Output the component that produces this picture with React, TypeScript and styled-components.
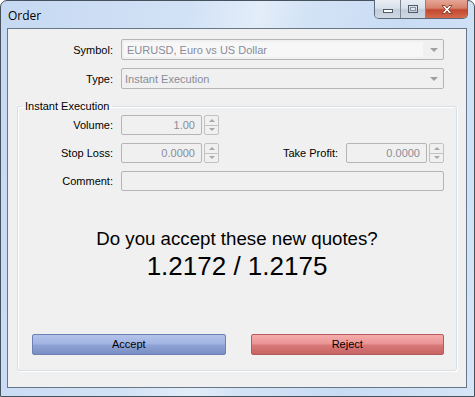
import styled, { createGlobalStyle } from "styled-components";

const GlobalStyle = createGlobalStyle`
    html, body {
        margin: 0;
        padding: 0;
        overflow: hidden;
    }
    * {
        box-sizing: border-box;
    }
`;

const Window = styled.div`
    display: flex;
    flex-direction: column;
    width: 475px;
    height: 397px;
    border: 1px solid #46525e;
    border-radius: 7px 7px 0 0;
    background: linear-gradient(100deg, #c6d9f2 0%, #d2e2f6 35%, #e3edf9 48%, #d4e3f6 56%, #c9dcf4 75%, #d6e5f7 100%);
    font-family: "Liberation Sans", Arial, sans-serif;
    font-size: 11px;
    color: #000;
`;

const TitleBar = styled.div`
    display: flex;
    align-items: flex-start;
    height: 27px;
    flex-shrink: 0;
`;

const Title = styled.div`
    padding: 6px 0 0 7px;
    font-family: "Open Sans", "Noto Sans", sans-serif;
    font-size: 12px;
    color: #000;
`;

const CaptionGroup = styled.div`
    display: flex;
    margin-left: auto;
    margin-right: 6px;
    height: 19px;
    margin-top: -1px;
    border: 1px solid #5b6877;
    border-top: none;
    border-radius: 0 0 5px 5px;
    overflow: hidden;
`;

const CaptionButton = styled.div<{ $width: number; $close?: boolean }>`
    display: flex;
    align-items: center;
    justify-content: center;
    width: ${(p) => p.$width}px;
    height: 100%;
    background: ${(p) =>
        p.$close
            ? "linear-gradient(to bottom, #e6a796 0%, #d7826c 45%, #c2472e 55%, #d56b4f 100%)"
            : "linear-gradient(to bottom, #e9eef4 0%, #d9e1ea 45%, #c2cddb 55%, #cfd9e5 100%)"};
    & + & {
        border-left: 1px solid #7b8896;
    }
`;

const Client = styled.div`
    display: flex;
    flex-direction: column;
    flex: 1;
    margin: 0 7px 8px 6px;
    border: 1px solid #66778a;
    background: #f0f0f0;
`;

const TopRows = styled.div`
    display: flex;
    flex-direction: column;
    gap: 8px;
    padding: 10px 22px 0 0;
`;

const Row = styled.div`
    display: flex;
    align-items: center;
    gap: 8px;
    height: 21px;
`;

const Label = styled.span<{ $width?: number }>`
    width: ${(p) => (p.$width ? `${p.$width}px` : "auto")};
    flex: ${(p) => (p.$width ? "none" : "1")};
    text-align: right;
    white-space: nowrap;
`;

const SelectBox = styled.div`
    position: relative;
    display: flex;
    align-items: center;
    flex: 1;
    height: 21px;
    padding: 2px 20px 2px 2px;
    border: 1px solid #b5b5b5;
    border-radius: 2px;
    background: #f0f0f0;
    color: #8a8c99;
`;

const SelectText = styled.div<{ $highlight?: boolean }>`
    display: flex;
    align-items: center;
    width: 100%;
    height: 100%;
    padding-left: ${(p) => (p.$highlight ? "3px" : "1px")};
    background: ${(p) => (p.$highlight ? "#f7f7f7" : "transparent")};
`;

const Arrow = styled.span`
    position: absolute;
    right: 5px;
    top: 8px;
    width: 0;
    height: 0;
    border-left: 4px solid transparent;
    border-right: 4px solid transparent;
    border-top: 4px solid #a0a0a0;
`;

const Group = styled.fieldset`
    display: flex;
    flex-direction: column;
    flex: 1;
    margin: 11px 9px 16px 9px;
    padding: 2px 12px 15px 0;
    border: 1px solid #d5dfe5;
    border-radius: 3px;
    box-shadow: inset 1px 1px 0 #fff, 1px 1px 0 #fff;
    min-width: 0;
`;

const Legend = styled.legend`
    margin-left: 4px;
    padding: 0 3px;
    line-height: 13px;
`;

const GroupRows = styled.div`
    display: flex;
    flex-direction: column;
    gap: 8px;
`;

const FieldRow = styled.div`
    display: flex;
    align-items: center;
    gap: 8px;
    height: 20px;
`;

const Spinner = styled.div`
    display: flex;
    align-items: center;
    gap: 2px;
`;

const NumberBox = styled.div`
    width: 81px;
    height: 20px;
    padding: 0 6px;
    border: 1px solid #b5b5b5;
    border-radius: 2px;
    line-height: 18px;
    text-align: right;
    color: #8a8c99;
`;

const SpinButtons = styled.div`
    display: flex;
    flex-direction: column;
    width: 15px;
    height: 20px;
    border: 1px solid #c2c2c2;
    border-radius: 2px;
`;

const SpinHalf = styled.div<{ $up?: boolean }>`
    display: flex;
    align-items: center;
    justify-content: center;
    flex: 1;
    & + & {
        border-top: 1px solid #c2c2c2;
    }
    &::after {
        content: "";
        border-left: 3px solid transparent;
        border-right: 3px solid transparent;
        ${(p) => (p.$up ? "border-bottom: 3px solid #a8a8a8;" : "border-top: 3px solid #a8a8a8;")}
    }
`;

const TextBox = styled.div`
    flex: 1;
    height: 20px;
    border: 1px solid #b5b5b5;
    border-radius: 2px;
`;

const Quote = styled.div`
    display: flex;
    flex-direction: column;
    align-items: center;
    margin-top: 37px;
    padding-left: 12px;
`;

const Question = styled.div`
    font-size: 18.7px;
    line-height: 21px;
`;

const Prices = styled.div`
    margin-top: 2px;
    font-size: 26px;
    line-height: 30px;
`;

const Buttons = styled.div`
    display: flex;
    gap: 25px;
    margin-top: auto;
    padding-left: 14px;
`;

const ActionButton = styled.div<{ $variant: "accept" | "reject" }>`
    flex: 1;
    height: 21px;
    line-height: 19px;
    text-align: center;
    border: 1px solid ${(p) => (p.$variant === "accept" ? "#6d80b6" : "#b35a5a")};
    border-radius: 2px;
    background: ${(p) =>
        p.$variant === "accept"
            ? "linear-gradient(to bottom, #b3c3ea 0%, #a2b4e2 45%, #8fa2d4 55%, #7a8ec3 100%)"
            : "linear-gradient(to bottom, #f6acac 0%, #ea9595 45%, #d87878 55%, #c86464 100%)"};
    color: #000;
`;

function CloseGlyph() {
    return (
        <svg width="14" height="11" viewBox="0 0 14 11">
            <path
                d="M2 1.5 L5 1.5 L7 4 L9 1.5 L12 1.5 L8.6 5.5 L12 9.5 L9 9.5 L7 7 L5 9.5 L2 9.5 L5.4 5.5 Z"
                fill="#fff"
                stroke="#7a2a1c"
                strokeWidth="0.8"
                strokeLinejoin="round"
            />
        </svg>
    );
}

function MinGlyph() {
    return (
        <svg width="12" height="10" viewBox="0 0 12 10">
            <rect x="1.5" y="5.5" width="9" height="3" fill="#fff" stroke="#4f5b68" strokeWidth="1" />
        </svg>
    );
}

function MaxGlyph() {
    return (
        <svg width="12" height="10" viewBox="0 0 12 10">
            <rect x="1.5" y="1.5" width="9" height="7" fill="none" stroke="#4f5b68" strokeWidth="1" />
            <rect x="3.5" y="3.5" width="5" height="3" fill="#dfe6ee" stroke="#8793a0" strokeWidth="1" />
        </svg>
    );
}

function SpinField({ value }: { value: string }) {
    return (
        <Spinner>
            <NumberBox>{value}</NumberBox>
            <SpinButtons>
                <SpinHalf $up />
                <SpinHalf />
            </SpinButtons>
        </Spinner>
    );
}

function App() {
    return (
        <>
            <GlobalStyle />
            <Window>
                <TitleBar>
                    <Title>Order</Title>
                    <CaptionGroup>
                        <CaptionButton $width={25}>
                            <MinGlyph />
                        </CaptionButton>
                        <CaptionButton $width={25}>
                            <MaxGlyph />
                        </CaptionButton>
                        <CaptionButton $width={42} $close>
                            <CloseGlyph />
                        </CaptionButton>
                    </CaptionGroup>
                </TitleBar>
                <Client>
                    <TopRows>
                        <Row>
                            <Label $width={105}>Symbol:</Label>
                            <SelectBox>
                                <SelectText $highlight>EURUSD, Euro vs US Dollar</SelectText>
                                <Arrow />
                            </SelectBox>
                        </Row>
                        <Row>
                            <Label $width={105}>Type:</Label>
                            <SelectBox>
                                <SelectText>Instant Execution</SelectText>
                                <Arrow />
                            </SelectBox>
                        </Row>
                    </TopRows>
                    <Group>
                        <Legend>Instant Execution</Legend>
                        <GroupRows>
                            <FieldRow>
                                <Label $width={95}>Volume:</Label>
                                <SpinField value="1.00" />
                            </FieldRow>
                            <FieldRow>
                                <Label $width={95}>Stop Loss:</Label>
                                <SpinField value="0.0000" />
                                <Label>Take Profit:</Label>
                                <SpinField value="0.0000" />
                            </FieldRow>
                            <FieldRow>
                                <Label $width={95}>Comment:</Label>
                                <TextBox />
                            </FieldRow>
                        </GroupRows>
                        <Quote>
                            <Question>Do you accept these new quotes?</Question>
                            <Prices>1.2172 / 1.2175</Prices>
                        </Quote>
                        <Buttons>
                            <ActionButton $variant="accept">Accept</ActionButton>
                            <ActionButton $variant="reject">Reject</ActionButton>
                        </Buttons>
                    </Group>
                </Client>
            </Window>
        </>
    );
}

export default App;
